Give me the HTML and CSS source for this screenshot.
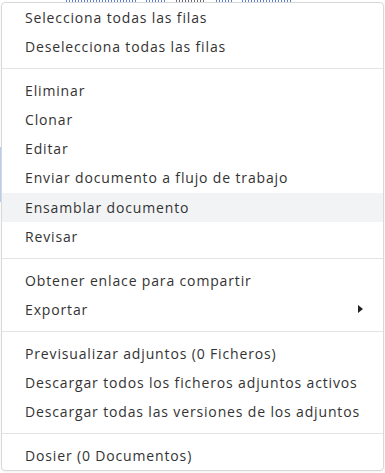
FILE: index.html
```html
<!DOCTYPE html>
<html lang="es">
<head>
    <meta charset="UTF-8">
    <title>Menú contextual</title>
    <link rel="stylesheet" href="styles.css">
</head>
<body>
    <div class="page">
        <!-- restos de la fila de la tabla que queda detrás del menú -->
        <div class="page-line">
            <span class="frag blue w70"></span>
            <span class="frag blue w20"></span>
            <span class="frag w30"></span>
            <span class="frag blue w16"></span>
            <span class="frag blue w50"></span>
        </div>
        <div class="page-mark"></div>
    </div>

    <!-- menú de acciones sobre la tabla -->
    <ul class="menu">
        <li class="menu-item">Selecciona todas las filas</li>
        <li class="menu-item">Deselecciona todas las filas</li>
        <li class="menu-divider"></li>
        <li class="menu-item">Eliminar</li>
        <li class="menu-item">Clonar</li>
        <li class="menu-item">Editar</li>
        <li class="menu-item">Enviar documento a flujo de trabajo</li>
        <li class="menu-item active">Ensamblar documento</li>
        <li class="menu-item">Revisar</li>
        <li class="menu-divider"></li>
        <li class="menu-item">Obtener enlace para compartir</li>
        <li class="menu-item submenu">Exportar <span class="caret"></span></li>
        <li class="menu-divider"></li>
        <li class="menu-item">Previsualizar adjuntos (0 Ficheros)</li>
        <li class="menu-item">Descargar todos los ficheros adjuntos activos</li>
        <li class="menu-item">Descargar todas las versiones de los adjuntos</li>
        <li class="menu-divider"></li>
        <li class="menu-item">Dosier (0 Documentos)</li>
    </ul>
</body>
</html>
```

FILE: styles.css
```css
body {
    margin: 0;
    background: #fff;
    font-family: "Open Sans", "Liberation Sans", sans-serif;
    color: #333;
}
.page {
    position: relative;
    width: 385px;
    height: 473px;
    overflow: hidden;
}
.page-line {
    display: flex;
    gap: 10px;
    height: 2px;
    padding-left: 66px;
}
.frag {
    height: 2px;
    background: repeating-linear-gradient(90deg, #6b6f76 0 1px, transparent 1px 3px);
}
.frag.blue {
    background: repeating-linear-gradient(90deg, #5a7fd0 0 1px, transparent 1px 3px);
}
.w70 { width: 70px; }
.w50 { width: 50px; }
.w30 { width: 30px; }
.w20 { width: 20px; }
.w16 { width: 16px; }
.page-mark {
    position: absolute;
    left: 0;
    top: 147px;
    width: 1px;
    height: 55px;
    background: #b8d2f6;
}
.menu {
    position: absolute;
    top: 2px;
    left: 1px;
    width: 381px;
    margin: 0;
    padding: 0;
    list-style: none;
    background: #fff;
    border: 1px solid #d8d8d8;
    border-radius: 4px;
    box-shadow: 0 1px 3px rgba(0, 0, 0, 0.06);
    font-size: 14px;
}
.menu-item {
    display: flex;
    align-items: center;
    justify-content: space-between;
    padding: 5px 20px 5px 23px;
    line-height: 19.1px;
    letter-spacing: 0.85px;
    cursor: pointer;
}
.menu-item.active {
    background: #f2f3f5;
}
.menu-divider {
    height: 1px;
    margin: 7px 0;
    background: #e4e4e4;
}
.caret {
    width: 0;
    height: 0;
    border-left: 5px solid #222;
    border-top: 4.5px solid transparent;
    border-bottom: 4.5px solid transparent;
}
```
